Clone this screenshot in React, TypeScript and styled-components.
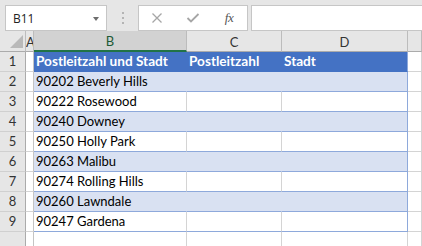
import React from "react";
import styled, { createGlobalStyle, css } from "styled-components";

const GlobalStyle = createGlobalStyle`
  html, body {
    margin: 0;
    padding: 0;
    width: 422px;
    height: 246px;
    overflow: hidden;
    background: #e6e6e6;
  }
  * { box-sizing: border-box; }
`;

const CELL_FONT = `"Lato", "Open Sans", sans-serif`;

const Frame = styled.div`
  display: flex;
  flex-direction: column;
  width: 422px;
  height: 246px;
  overflow: hidden;
  background: #e6e6e6;
`;

const TopBar = styled.div`
  display: flex;
  align-items: flex-start;
  height: 40px;
  padding: 5px 0 0 5px;
`;

const NameBox = styled.div`
  display: flex;
  align-items: center;
  width: 102px;
  height: 26px;
  background: #fff;
  border: 1px solid #c6c6c6;
  padding: 0 7px 0 7px;
`;

const NameText = styled.span`
  font-family: "Open Sans", sans-serif;
  font-size: 12px;
  color: #222;
`;

const DropArrow = styled.span`
  margin-left: auto;
  width: 0;
  height: 0;
  border-left: 3.5px solid transparent;
  border-right: 3.5px solid transparent;
  border-top: 4px solid #6d6d6d;
  margin-top: 1px;
`;

const Grip = styled.div`
  display: flex;
  flex-direction: column;
  align-items: center;
  justify-content: center;
  gap: 3px;
  width: 31px;
  height: 26px;
`;

const Dot = styled.span`
  width: 2px;
  height: 2px;
  background: #b4b4b4;
`;

const FxButtons = styled.div`
  display: flex;
  align-items: center;
  width: 110px;
  height: 26px;
  background: #fff;
  border: 1px solid #c6c6c6;
`;

const FxSlot = styled.div`
  display: flex;
  align-items: center;
  justify-content: center;
  width: 36px;
  height: 24px;
`;

const FxLabel = styled.span`
  font-family: "Liberation Serif", serif;
  font-style: italic;
  font-size: 13px;
  color: #555;
  letter-spacing: -0.5px;
`;

const FormulaInput = styled.div`
  flex: 1;
  height: 26px;
  margin-left: 3px;
  margin-right: -4px;
  background: #fff;
  border: 1px solid #c6c6c6;
`;

const Sheet = styled.div`
  display: grid;
  grid-template-columns: 26px 8px 153px 95px 126px 1fr;
  grid-template-rows: 21px repeat(10, 20px);
  font-family: ${CELL_FONT};
  font-size: 13px;
`;

const Corner = styled.div`
  position: relative;
  background: #e6e6e6;
  border-right: 1px solid #bdbdbd;
  border-bottom: 1px solid #ababab;
`;

const CornerTri = styled.svg`
  position: absolute;
  left: 0;
  top: 0;
`;

const ColHeader = styled.div<{ $selected?: boolean; $clip?: boolean }>`
  display: flex;
  align-items: center;
  justify-content: ${(p) => (p.$clip ? "flex-start" : "center")};
  overflow: hidden;
  background: ${(p) => (p.$selected ? "#d2d2d2" : "#e6e6e6")};
  color: ${(p) => (p.$selected ? "#1d5a36" : "#333")};
  border-right: 1px solid #bcbcbc;
  border-bottom: ${(p) => (p.$selected ? "2px solid #217346" : "1px solid #ababab")};
  padding-top: 1px;
`;

const RowHeader = styled.div`
  display: flex;
  align-items: flex-end;
  justify-content: center;
  padding-bottom: 2px;
  background: #e6e6e6;
  color: #333;
  border-right: 1px solid #ababab;
  border-bottom: 1px solid #d0d0d0;
`;

type Kind = "head" | "band" | "plain" | "blank";

const Cell = styled.div<{ $kind: Kind; $last?: boolean }>`
  display: flex;
  align-items: flex-end;
  padding: 0 0 2px 2px;
  white-space: nowrap;
  overflow: hidden;
  color: #000;
  ${(p) => {
    switch (p.$kind) {
      case "head":
        return css`
          background: #4472c4;
          color: #fff;
          font-weight: 700;
          font-size: 13.6px;
          border-bottom: 1px solid #4472c4;
          border-right: 1px solid ${p.$last ? "#8ea9db" : "#4472c4"};
        `;
      case "band":
        return css`
          background: #d9e1f2;
          border-bottom: 1px solid #8ea9db;
          border-right: 1px solid ${p.$last ? "#8ea9db" : "#d9e1f2"};
        `;
      case "plain":
        return css`
          background: #fff;
          border-bottom: 1px solid #8ea9db;
          border-right: 1px solid ${p.$last ? "#8ea9db" : "#d4d4d4"};
        `;
      default:
        return css`
          background: #fff;
          border-bottom: 1px solid #d4d4d4;
          border-right: 1px solid #d4d4d4;
        `;
    }
  }}
`;

const ACol = styled.div`
  background: #fff;
  border-right: 1px solid #c4c4c4;
  border-bottom: 1px solid #d4d4d4;
`;

const rows: string[] = [
  "90202 Beverly Hills",
  "90222 Rosewood",
  "90240 Downey",
  "90250 Holly Park",
  "90263 Malibu",
  "90274 Rolling Hills",
  "90260 Lawndale",
  "90247 Gardena",
];

export default function App() {
  return (
    <>
      <GlobalStyle />
      <Frame>
        <TopBar>
          <NameBox>
            <NameText>B11</NameText>
            <DropArrow />
          </NameBox>
          <Grip>
            <Dot />
            <Dot />
            <Dot />
          </Grip>
          <FxButtons>
            <FxSlot>
              <svg width="12" height="12" viewBox="0 0 12 12">
                <path d="M1.5 1.5 L10.5 10.5 M10.5 1.5 L1.5 10.5" stroke="#a6a6a6" strokeWidth="1.3" fill="none" />
              </svg>
            </FxSlot>
            <FxSlot>
              <svg width="14" height="12" viewBox="0 0 14 12">
                <path d="M1.5 6 L5 9.5 L12.5 2" stroke="#a6a6a6" strokeWidth="1.8" fill="none" />
              </svg>
            </FxSlot>
            <FxSlot>
              <FxLabel>fx</FxLabel>
            </FxSlot>
          </FxButtons>
          <FormulaInput />
        </TopBar>
        <Sheet>
          <Corner>
            <CornerTri width="25" height="20" viewBox="0 0 25 20">
              <polygon points="23,4 23,17 10,17" fill="#b9b9b9" />
            </CornerTri>
          </Corner>
          <ColHeader $clip>A</ColHeader>
          <ColHeader $selected>B</ColHeader>
          <ColHeader>C</ColHeader>
          <ColHeader>D</ColHeader>
          <ColHeader />

          <RowHeader>1</RowHeader>
          <ACol />
          <Cell $kind="head">Postleitzahl und Stadt</Cell>
          <Cell $kind="head">Postleitzahl</Cell>
          <Cell $kind="head" $last>Stadt</Cell>
          <Cell $kind="blank" />

          {rows.map((text, i) => {
            const kind: Kind = i % 2 === 0 ? "band" : "plain";
            return (
              <React.Fragment key={text}>
                <RowHeader>{i + 2}</RowHeader>
                <ACol />
                <Cell $kind={kind}>{text}</Cell>
                <Cell $kind={kind} />
                <Cell $kind={kind} $last />
                <Cell $kind="blank" />
              </React.Fragment>
            );
          })}

          <RowHeader />
          <ACol />
          <Cell $kind="blank" />
          <Cell $kind="blank" />
          <Cell $kind="blank" />
          <Cell $kind="blank" />
        </Sheet>
      </Frame>
    </>
  );
}
